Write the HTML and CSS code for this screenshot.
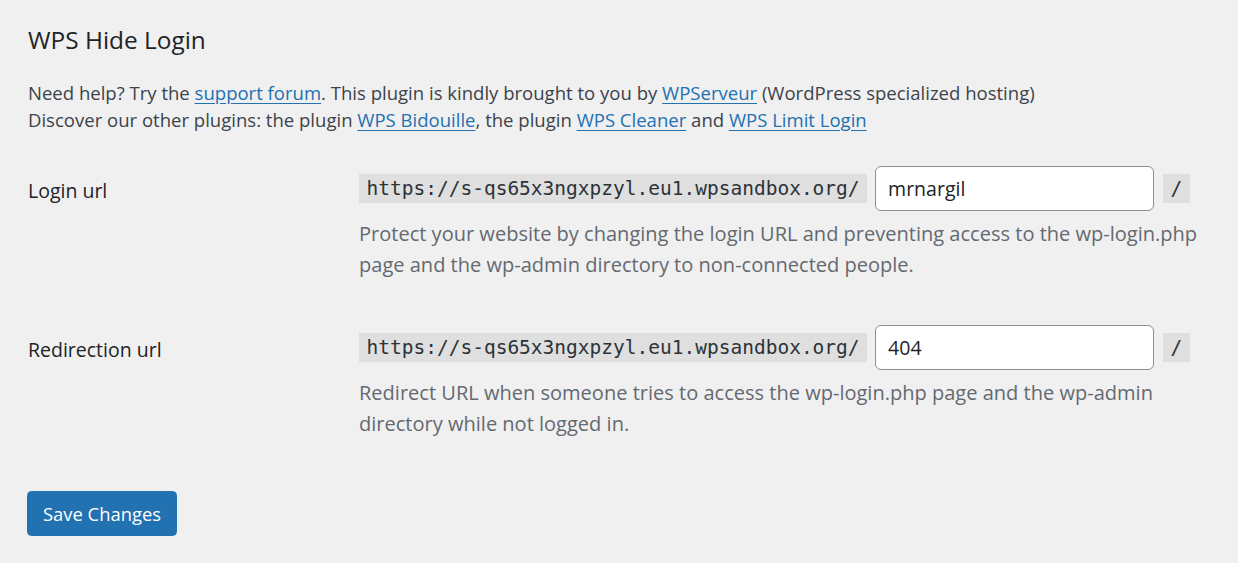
FILE: index.html
```html
<!DOCTYPE html>
<html lang="en">
<head>
<meta charset="utf-8">
<title>WPS Hide Login</title>
<link rel="stylesheet" href="styles.css">
</head>
<body>
<div class="wrap">
  <h2 class="title">WPS Hide Login</h2>
  <p class="intro">Need help? Try the <a href="#">support forum</a>. This plugin is kindly brought to you by <a href="#">WPServeur</a> (WordPress specialized hosting)<br>Discover our other plugins: the plugin <a href="#">WPS Bidouille</a>, the plugin <a href="#">WPS Cleaner</a> and <a href="#">WPS Limit Login</a></p>

  <div class="form-table">
    <div class="row row-login">
      <label class="label" for="login">Login url</label>
      <div class="field">
        <div class="url-line">
          <code class="code">https://s-qs65x3ngxpzyl.eu1.wpsandbox.org/</code>
          <input class="text-input" id="login" type="text" value="mrnargil">
          <code class="code">/</code>
        </div>
        <p class="description">Protect your website by changing the login URL and preventing access to the wp-login.php page and the wp-admin directory to non-connected people.</p>
      </div>
    </div>
    <div class="row row-redirect">
      <label class="label" for="redirect">Redirection url</label>
      <div class="field">
        <div class="url-line">
          <code class="code">https://s-qs65x3ngxpzyl.eu1.wpsandbox.org/</code>
          <input class="text-input" id="redirect" type="text" value="404">
          <code class="code">/</code>
        </div>
        <p class="description">Redirect URL when someone tries to access the wp-login.php page and the wp-admin directory while not logged in.</p>
      </div>
    </div>
  </div>

  <div class="submit">
    <button class="button-primary" type="button">Save Changes</button>
  </div>
</div>
</body>
</html>
```

FILE: styles.css
```css
html, body {
  margin: 0;
  padding: 0;
  background: #f0f0f1;
}

body {
  font-family: "Open Sans", "Noto Sans", "Liberation Sans", sans-serif;
  color: #3c434a;
  width: 1238px;
  height: 563px;
  overflow: hidden;
}

.wrap {
  padding: 0 0 0 28px;
}

.title {
  margin: 0;
  padding-top: 24px;
  font-size: 24.4px;
  line-height: 32px;
  font-weight: 400;
  color: #1d2327;
}

.intro {
  margin: 23px 0 0;
  font-size: 18.55px;
  line-height: 27px;
  color: #3c434a;
}

.intro a {
  color: #2271b1;
  text-decoration: underline;
  text-underline-offset: 3px;
}

.form-table {
  display: flex;
  flex-direction: column;
}

.row {
  display: flex;
  align-items: flex-start;
}

.row-login {
  margin-top: 33px;
}

.row-redirect {
  margin-top: 45px;
}

.label {
  width: 331px;
  flex: none;
  font-size: 19.5px;
  line-height: 27px;
  color: #1d2327;
  padding-top: 11px;
}

.field {
  display: flex;
  flex-direction: column;
}

.url-line {
  display: flex;
  align-items: center;
  gap: 8px;
}

.code {
  font-family: "DejaVu Sans Mono", "Liberation Mono", monospace;
  font-size: 19.5px;
  line-height: 24px;
  padding: 3px 7.5px 2px;
  color: #2c3338;
  background: rgba(0, 0, 0, 0.07);
}

.url-line .code:last-child {
  margin-left: 1px;
}

.text-input {
  box-sizing: border-box;
  width: 279px;
  height: 45px;
  margin: 0;
  padding: 0 12px;
  border: 1px solid #8c8f94;
  border-radius: 6px;
  background: #fff;
  font-family: "Open Sans", "Noto Sans", sans-serif;
  font-size: 19.5px;
  color: #1d2327;
  outline: none;
}

.description {
  margin: 7px 0 0;
  width: 850px;
  font-size: 20.05px;
  line-height: 31px;
  color: #646970;
}

.submit {
  margin-top: 52px;
}

.button-primary {
  box-sizing: border-box;
  height: 45px;
  padding: 0 15px;
  margin: 0 0 0 -1px;
  border: 1px solid #2271b1;
  border-radius: 4.5px;
  background: #2271b1;
  color: #fff;
  font-family: "Open Sans", "Noto Sans", sans-serif;
  font-size: 18.4px;
  line-height: 42px;
  cursor: pointer;
}
```
